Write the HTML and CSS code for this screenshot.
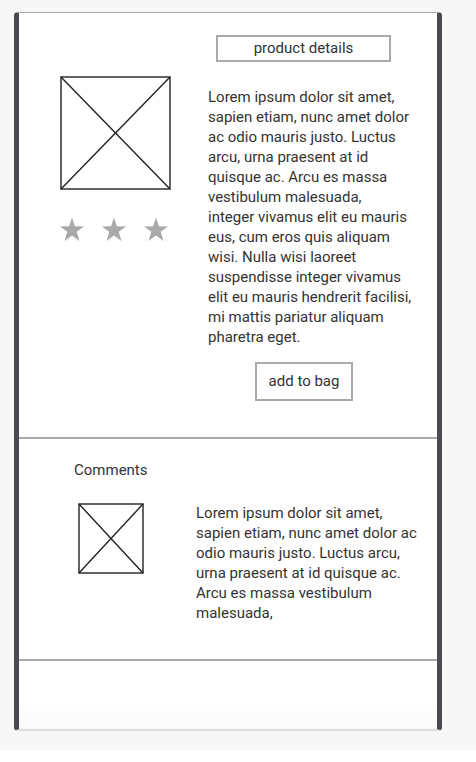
FILE: index.html
```html
<!DOCTYPE html>
<html lang="en">
<head>
  <meta charset="UTF-8" />
  <meta name="viewport" content="width=device-width, initial-scale=1.0"/>
  <title>Product</title>
  <link rel="stylesheet" href="styles.css">
</head>
<body>
  <div class="page">
    <div class="frame">
      <div class="product">
        <div class="product-left">
          <svg class="placeholder big" viewBox="0 0 111 114" preserveAspectRatio="none">
            <rect x="1" y="1" width="109" height="112" />
            <line x1="1" y1="1" x2="110" y2="113" />
            <line x1="110" y1="1" x2="1" y2="113" />
          </svg>
          <div class="stars">
            <svg class="star" viewBox="0 0 24 25"><polygon points="12,0.5 14.9,9.3 24,9.4 16.7,14.8 19.4,24 12,18.4 4.6,24 7.3,14.8 0,9.4 9.1,9.3" /></svg>
            <svg class="star" viewBox="0 0 24 25"><polygon points="12,0.5 14.9,9.3 24,9.4 16.7,14.8 19.4,24 12,18.4 4.6,24 7.3,14.8 0,9.4 9.1,9.3" /></svg>
            <svg class="star" viewBox="0 0 24 25"><polygon points="12,0.5 14.9,9.3 24,9.4 16.7,14.8 19.4,24 12,18.4 4.6,24 7.3,14.8 0,9.4 9.1,9.3" /></svg>
          </div>
        </div>
        <div class="product-right">
          <div class="box-btn details-btn">product details</div>
          <p class="desc">Lorem ipsum dolor sit amet,<br>
            sapien etiam, nunc amet dolor<br>
            ac odio mauris justo. Luctus<br>
            arcu, urna praesent at id<br>
            quisque ac. Arcu es massa<br>
            vestibulum malesuada,<br>
            integer vivamus elit eu mauris<br>
            eus, cum eros quis aliquam<br>
            wisi. Nulla wisi laoreet<br>
            suspendisse integer vivamus<br>
            elit eu mauris hendrerit facilisi,<br>
            mi mattis pariatur aliquam<br>
            pharetra eget.</p>
          <div class="box-btn bag-btn">add to bag</div>
        </div>
      </div>

      <div class="comments">
        <div class="comments-title">Comments</div>
        <div class="comment">
          <svg class="placeholder small" viewBox="0 0 66 71" preserveAspectRatio="none">
            <rect x="1" y="1" width="64" height="69" />
            <line x1="1" y1="1" x2="65" y2="70" />
            <line x1="65" y1="1" x2="1" y2="70" />
          </svg>
          <p class="comment-text">Lorem ipsum dolor sit amet, sapien etiam, nunc amet dolor ac odio mauris justo. Luctus arcu, urna praesent at id quisque ac. Arcu es massa vestibulum malesuada,</p>
        </div>
      </div>

      <div class="footer-space"></div>
    </div>
  </div>
</body>
</html>
```

FILE: styles.css
```css
* {
  box-sizing: border-box;
  font-family: Roboto, "Liberation Sans", sans-serif;
}

html, body {
  margin: 0;
  background: #fff;
}

.page {
  height: 750px;
  background: #f7f7f7;
  padding: 12px 0 0 14px;
}

.frame {
  width: 428px;
  height: 719px;
  background: #fff;
  border-left: 5px solid #4b4a50;
  border-right: 5px solid #4b4a50;
  border-top: 1px solid #a8a8a8;
  border-bottom: 2px solid #dcdcdc;
  border-radius: 4px;
  display: flex;
  flex-direction: column;
  color: #333;
  font-size: 15px;
  line-height: 20px;
}

.product {
  height: 426px;
  flex: none;
  border-bottom: 2px solid #aaa;
  display: flex;
  padding-top: 22px;
}

.product-left {
  width: 189px;
  padding: 41px 0 0 41px;
}

.placeholder {
  display: block;
}

.placeholder rect,
.placeholder line {
  fill: none;
  stroke: #222;
  stroke-width: 1.4;
}

.big {
  width: 111px;
  height: 114px;
}

.stars {
  display: flex;
  gap: 18px;
  margin-top: 27px;
}

.star {
  width: 24px;
  height: 25px;
  fill: #a9a9a9;
}

.product-right {
  width: 225px;
}

.box-btn {
  border: 2px solid #aaa;
  text-align: center;
  background: #fff;
}

.details-btn {
  width: 175px;
  height: 27px;
  line-height: 23px;
  margin-left: 8px;
}

.desc {
  margin: 25px 0 15px;
}

.bag-btn {
  width: 98px;
  height: 39px;
  line-height: 35px;
  margin-left: 47px;
}

.comments {
  height: 222px;
  flex: none;
  border-bottom: 2px solid #aaa;
  padding: 21px 0 0 55px;
}

.comments-title {
  margin-bottom: 23px;
}

.comment {
  display: flex;
  padding-left: 4px;
}

.small {
  width: 66px;
  height: 71px;
  flex: none;
}

.comment-text {
  margin: 0 0 0 52px;
  width: 230px;
}

.footer-space {
  flex: 1;
  background: linear-gradient(#fff 60%, #fafafa);
}
```
